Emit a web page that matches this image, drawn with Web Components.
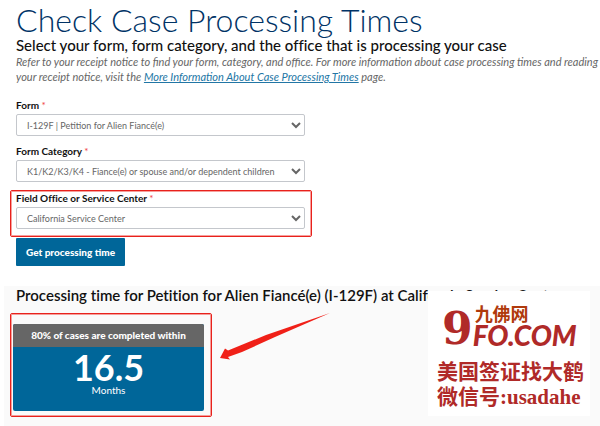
<!DOCTYPE html>
<html lang="en">
<head>
<meta charset="utf-8">
<title>Check Case Processing Times</title>
<style>
  body {
    margin: 0;
    background: #fff;
    color: #111;
    font-family: Lato, "Open Sans", sans-serif;
    font-variant-ligatures: none;
  }
</style>
</head>
<body>
<processing-times-page></processing-times-page>

<script>
const define = (name, html, setup) => {
  const template = document.createElement('template');
  template.innerHTML = html;

  customElements.define(name, class extends HTMLElement {
    constructor() {
      super();
      this.attachShadow({ mode: 'open' });
      this.shadowRoot.appendChild(template.content.cloneNode(true));
    }

    connectedCallback() {
      if (setup) setup(this, this.shadowRoot);
    }
  });
};

define('page-intro', `
  <style>
    :host {
      display: block;
      padding: 0 0 0 16px;
    }

    h1 {
      margin: 0 0 -2px;
      font-size: 32px;
      font-weight: 300;
      line-height: 39px;
      color: #003366;
    }

    h2 {
      margin: 0;
      font-size: 15px;
      font-weight: 500;
      line-height: 16px;
    }

    p {
      margin: 1px 0 0;
      font-size: 11px;
      font-style: italic;
      font-variant-ligatures: normal;
      line-height: 15px;
      color: #666;
    }

    a {
      color: #2276a5;
    }
  </style>
  <h1>Check Case Processing Times</h1>
  <h2>Select your form, form category, and the office that is processing your case</h2>
  <p>Refer to your receipt notice to find your form, category, and office. For more information about case processing times and reading<br>your receipt notice, visit the <a href="#">More Information About Case Processing Times</a> page.</p>
`);

define('select-field', `
  <style>
    :host {
      display: block;
    }

    label {
      display: block;
      font-size: 10px;
      font-weight: 700;
      line-height: 15px;
      color: #111;
    }

    label span {
      color: #f04040;
      font-weight: 400;
    }

    select {
      display: block;
      box-sizing: border-box;
      width: 100%;
      height: 22px;
      margin-top: 1px;
      padding: 0 0 0 6px;
      border: 1px solid #c4c7cc;
      border-radius: 2px;
      background: #fff;
      color: #666;
      font-family: inherit;
      font-size: 9px;
    }
  </style>
  <label for="field"><slot></slot> <span>*</span></label>
  <select id="field"><option></option></select>
`, (host, root) => {
  root.querySelector('option').textContent = host.getAttribute('value');
});

// Red frame around the part of the page to look at
define('red-frame', `
  <style>
    :host {
      display: block;
      box-sizing: border-box;
      border: 1px solid #e8211c;
      outline: 1px solid #f0413a80;
      outline-offset: -2px;
      border-radius: 2px;
    }
  </style>
  <slot></slot>
`);

define('case-form', `
  <style>
    :host {
      display: block;
      padding: 14px 0 20px 10px;
    }

    form {
      display: grid;
      gap: 8px;
      width: 51%;
      min-width: 302px;
    }

    .field {
      padding: 0 7px 0 6px;
    }

    red-frame {
      padding: 0 6px 7px 5px;
    }

    button {
      justify-self: start;
      height: 28px;
      margin: -7px 0 0 6px;
      padding: 0 10px;
      border: 0;
      border-radius: 1px;
      background: #006699;
      color: #fff;
      font-family: inherit;
      font-size: 10px;
      font-weight: 900;
    }
  </style>
  <form>
    <select-field class="field" value="I-129F | Petition for Alien Fiancé(e)">Form</select-field>
    <select-field class="field" value="K1/K2/K3/K4 - Fiance(e) or spouse and/or dependent children">Form Category</select-field>
    <red-frame>
      <select-field value="California Service Center">Field Office or Service Center</select-field>
    </red-frame>
    <button type="button">Get processing time</button>
  </form>
`);

define('time-card', `
  <style>
    :host {
      display: block;
      border-radius: 2px;
      overflow: hidden;
      background: #006699;
      color: #fff;
      text-align: center;
    }

    header {
      background: #666;
      font-size: 10px;
      font-weight: 900;
      line-height: 23px;
    }

    strong {
      display: block;
      padding-top: 3px;
      font-size: 36px;
      line-height: 34px;
    }

    p {
      margin: 0;
      padding-bottom: 15px;
      font-size: 10px;
      line-height: 12px;
    }
  </style>
  <header>80% of cases are completed within</header>
  <strong><slot></slot></strong>
  <p>Months</p>
`);

define('site-stamp', `
  <style>
    :host {
      display: block;
      box-sizing: border-box;
      padding: 12px 0 0 9px;
      background: #fff;
      color: #b02a28;
      font-family: "Liberation Serif", "Noto Sans CJK SC", serif;
      font-weight: 700;
    }

    .logo {
      display: flex;
      height: 57px;
    }

    .nine {
      padding-left: 5px;
      font-family: "DejaVu Serif", serif;
      font-size: 44px;
      line-height: 52px;
    }

    .cn {
      padding-left: 2px;
      color: #b03a0c;
      font-family: "Noto Sans CJK SC", sans-serif;
      font-size: 18px;
      line-height: 20px;
    }

    .com {
      font-family: Lato, sans-serif;
      font-size: 28px;
      font-style: italic;
      font-weight: 900;
      line-height: 24px;
    }

    p {
      margin: 0;
      font-size: 21px;
      line-height: 25px;
      white-space: nowrap;
    }
  </style>
  <div class="logo">
    <div class="nine">9</div>
    <div>
      <div class="cn">九佛网</div>
      <div class="com">FO.COM</div>
    </div>
  </div>
  <p>美国签证找大鹤</p>
  <p>微信号:usadahe</p>
`);

define('case-result', `
  <style>
    :host {
      display: block;
      position: relative;
      margin-left: 4px;
      padding: 0 0 9px 6px;
      background: #fafafa;
    }

    h2 {
      margin: 0;
      padding: 0 0 8px 6px;
      font-size: 15px;
      font-weight: 600;
      line-height: 19px;
      white-space: nowrap;
    }

    red-frame {
      width: 202px;
      padding: 10px 7px 5px 2px;
    }

    svg {
      position: absolute;
      left: 210px;
      top: 24px;
    }

    site-stamp {
      position: absolute;
      right: 10px;
      top: 5px;
      width: 162px;
      height: 125px;
    }
  </style>
  <h2>Processing time for Petition for Alien Fiancé(e) (I-129F) at California Service Center</h2>
  <red-frame><time-card>16.5</time-card></red-frame>
  <svg width="116" height="52" viewBox="0 0 116 52" aria-hidden="true">
    <path d="M116 3 L52 25 L14 40.5 L11 38.5 L6 48 L16 49.5 L14 47 L28 42 L61 27 Z" fill="#f02018"/>
  </svg>
  <site-stamp></site-stamp>
`);

define('processing-times-page', `
  <style>
    :host {
      display: block;
      overflow-x: clip;
    }
  </style>
  <page-intro></page-intro>
  <case-form></case-form>
  <case-result></case-result>
`);
</script>
</body>
</html>
